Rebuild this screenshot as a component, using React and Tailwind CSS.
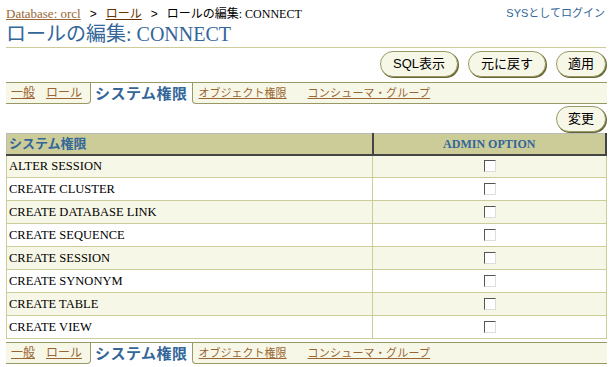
import React from 'react'

const SERIF = { fontFamily: '"Liberation Serif", "Noto Sans CJK JP", serif' }
const SANS = { fontFamily: '"Liberation Sans", "Noto Sans CJK JP", sans-serif' }

const PRIVS = [
  'ALTER SESSION', 'CREATE CLUSTER', 'CREATE DATABASE LINK', 'CREATE SEQUENCE',
  'CREATE SESSION', 'CREATE SYNONYM', 'CREATE TABLE', 'CREATE VIEW'
]

function PillButton({ children, className = '' }) {
  return (
    <button
      className={`h-[26px] rounded-full border border-[#999966] bg-[#f7f7e7] text-[13px] text-black shadow-[1px_1px_0_#666633] ${className}`}
      style={SANS}
    >
      {children}
    </button>
  )
}

function Tabs() {
  const link = 'text-[#996633] underline text-[11px] leading-none'
  return (
    <div className="flex h-[22px]" style={SANS}>
      <div className="flex items-center gap-[11px] pl-[5px] pr-[8px] bg-[#f7f7e7] border-t border-b border-r border-[#999966] rounded-br-[4px]">
        <a className={`${link} text-[12px]`}>一般</a>
        <a className={`${link} text-[12px]`}>ロール</a>
      </div>
      <div className="flex items-center px-[4px] bg-white border-t border-[#999966] text-[15px] font-bold text-[#336699] leading-none tracking-[0.5px]">
        システム権限
      </div>
      <div className="flex-1 flex items-center gap-[21px] pl-[6px] bg-[#f7f7e7] border-t border-b border-l border-[#999966] rounded-bl-[4px]">
        <a className={link}>オブジェクト権限</a>
        <a className={`${link} tracking-[0.2px]`}>コンシューマ・グループ</a>
      </div>
    </div>
  )
}

function Checkbox() {
  return (
    <span className="inline-block w-[12px] h-[12px] bg-white border border-t-[#555555] border-l-[#555555] border-r-[#dddddd] border-b-[#dddddd]" />
  )
}

export default function App() {
  return (
    <div className="w-[613px] h-[367px] bg-white overflow-hidden" style={SERIF}>
      <div className="mx-[6px] pt-[5px]">
        {/* breadcrumb */}
        <div className="flex items-center justify-between h-[17px] text-[12px]">
          <div className="flex items-center gap-[9px]">
            <a className="text-[#996633] underline text-[13px]">Database: orcl</a>
            <span style={SANS}>&gt;</span>
            <a className="text-[#663300] underline">ロール</a>
            <span style={SANS}>&gt;</span>
            <span>ロールの編集: CONNECT</span>
          </div>
          <a className="text-[#336699] text-[11px] pr-[2px]" style={SANS}>SYSとしてログイン</a>
        </div>

        {/* title */}
        <h1 className="text-[20px] leading-[24px] text-[#336699] h-[22px]">ロールの編集: CONNECT</h1>
        <div className="mt-[3px] border-t border-[#cccc99] mr-[1px]" />

        {/* top buttons */}
        <div className="flex justify-end gap-[10px] mt-[3px] pr-[1px]">
          <PillButton className="w-[78px]">SQL表示</PillButton>
          <PillButton className="w-[78px]">元に戻す</PillButton>
          <PillButton className="w-[50px]">適用</PillButton>
        </div>

        <div className="mt-[5px]">
          <Tabs />
        </div>

        {/* change button */}
        <div className="flex justify-end mt-[2px] pr-[1px]">
          <PillButton className="w-[50px]">変更</PillButton>
        </div>

        {/* table */}
        <table className="w-full mt-[1px] border-collapse text-[12px]" style={SERIF}>
          <thead>
            <tr className="bg-[#cccc99] h-[19px]">
              <th className="text-left font-bold text-[#336699] pl-[2px] border-t border-l border-t-[#bbbbbb] border-l-[#bbbbbb] border-b-2 border-b-[#444444] border-r-2 border-r-[#444444] w-[366px] text-[13px]" style={SANS}>
                システム権限
              </th>
              <th className="text-center font-bold text-[12px] text-[#336699] border-t border-t-[#bbbbbb] border-b-2 border-b-[#444444] border-r-2 border-r-[#444444]">
                ADMIN OPTION
              </th>
            </tr>
          </thead>
          <tbody>
            {PRIVS.map((p, i) => (
              <tr key={p} className={`h-[23px] ${i % 2 === 0 ? 'bg-[#f7f7e7]' : 'bg-white'}`}>
                <td className="pl-[2px] pt-[1px] border border-[#cccc99] text-[12.5px] text-black whitespace-nowrap" style={SERIF}>{p}</td>
                <td className="text-center border border-[#cccc99]">
                  <div className="flex justify-center pl-[2px]"><Checkbox /></div>
                </td>
              </tr>
            ))}
          </tbody>
        </table>

        <div className="mt-[3px]">
          <Tabs />
        </div>
      </div>
    </div>
  )
}
